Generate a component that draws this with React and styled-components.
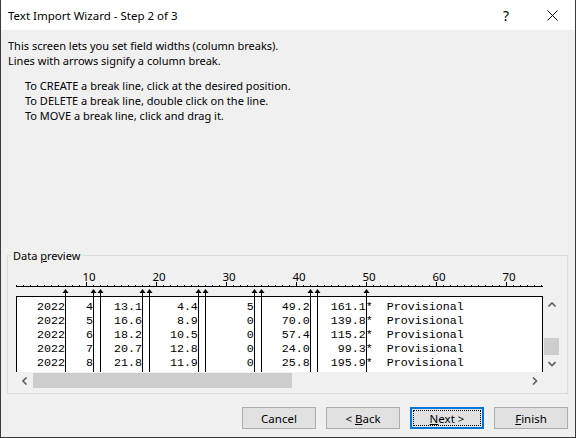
import React from 'react';
import styled, { createGlobalStyle, css } from 'styled-components';

const UI_FONT = '"Noto Sans", "Liberation Sans", sans-serif';
const CHAR_W = 7;
const RULER_LEN = 75;
const BREAKS = [7, 11, 12, 18, 19, 26, 27, 34, 35, 42, 43, 50];
const WIDTHS = [7, 4, 7, 8, 8, 8, 8];

const ROWS = [
  ['2022', '4', '13.1', '4.4', '5', '49.2', '161.1'],
  ['2022', '5', '16.6', '8.9', '0', '70.0', '139.8'],
  ['2022', '6', '18.2', '10.5', '0', '57.4', '115.2'],
  ['2022', '7', '20.7', '12.8', '0', '24.0', '99.3'],
  ['2022', '8', '21.8', '11.9', '0', '25.8', '195.9'],
];

const formatRow = (fields) =>
  fields.map((f, i) => f.padStart(WIDTHS[i])).join('') + '*  Provisional';

const GlobalStyle = createGlobalStyle`
  html, body {
    margin: 0;
    padding: 0;
    background: #f0f0f0;
  }
  body {
    font-family: ${UI_FONT};
    font-size: 11px;
    color: #000;
  }
`;

const Chevron = ({ dir }) => {
  const pts = {
    up: '0.5,4.5 4,1 7.5,4.5',
    down: '0.5,1 4,4.5 7.5,1',
    left: '4.5,0.5 1,4 4.5,7.5',
    right: '1,0.5 4.5,4 1,7.5',
  }[dir];
  const vertical = dir === 'up' || dir === 'down';
  return (
    <svg width={vertical ? 8 : 6} height={vertical ? 6 : 8}>
      <polyline points={pts} fill="none" stroke="#606060" strokeWidth="1.6" />
    </svg>
  );
};

const Ruler = () => {
  const ticks = [];
  for (let n = 0; n <= RULER_LEN; n++) {
    const x = n * CHAR_W + 0.5;
    const major = n % 10 === 0 && n > 0;
    ticks.push(
      <line key={'t' + n} x1={x} x2={x} y1={major ? 19 : 22} y2={23} stroke="#000" />
    );
    if (major) {
      ticks.push(
        <text key={'l' + n} x={x + 2.5} y={18} textAnchor="middle" fontSize="11.5" fontFamily={UI_FONT} fill="#000">
          {n}
        </text>
      );
    }
  }
  return (
    <RulerSvg width="527" height="33">
      <line x1="0" x2="527" y1="23.5" y2="23.5" stroke="#000" />
      {ticks}
    </RulerSvg>
  );
};

const BreakLines = () => (
  <Overlay width="527" height="109">
    {BREAKS.map((n) => {
      const x = n * CHAR_W + 0.5;
      return (
        <g key={n}>
          <line x1={x} x2={x} y1="27" y2="109" stroke="#000" />
          <polygon points={`${x},26 ${x - 3},30 ${x + 3},30`} fill="#000" />
        </g>
      );
    })}
  </Overlay>
);

const App = () => {
  return (
    <>
      <GlobalStyle />
      <Window>
        <TitleBar>
          <Title>Text Import Wizard - Step 2 of 3</Title>
          <CaptionButton>?</CaptionButton>
          <CaptionButton>
            <svg width="11" height="11">
              <path d="M0.5 0.5 L10.5 10.5 M10.5 0.5 L0.5 10.5" stroke="#000" strokeWidth="1" />
            </svg>
          </CaptionButton>
        </TitleBar>
        <Body>
          <Paragraph>
            This screen lets you set field widths (column breaks).
            <br />
            Lines with arrows signify a column break.
          </Paragraph>
          <Instructions>
            To CREATE a break line, click at the desired position.
            <br />
            To DELETE a break line, double click on the line.
            <br />
            To MOVE a break line, click and drag it.
          </Instructions>
          <GroupBox>
            <Legend>
              Data <u>p</u>review
            </Legend>
            <Preview>
              <Ruler />
              <DataBox>
                {ROWS.map((r, i) => (
                  <DataRow key={i}>{formatRow(r)}</DataRow>
                ))}
              </DataBox>
              <VScroll>
                <ScrollButton>
                  <Chevron dir="up" />
                </ScrollButton>
                <VTrack>
                  <VThumb />
                </VTrack>
                <ScrollButton>
                  <Chevron dir="down" />
                </ScrollButton>
              </VScroll>
              <HScroll>
                <ScrollButton>
                  <Chevron dir="left" />
                </ScrollButton>
                <HThumb />
                <HTrack />
                <ScrollButton>
                  <Chevron dir="right" />
                </ScrollButton>
              </HScroll>
              <BreakLines />
            </Preview>
          </GroupBox>
          <ButtonRow>
            <Button>
              <ButtonLabel>
                <span>Cancel</span>
              </ButtonLabel>
            </Button>
            <Button>
              <ButtonLabel>
                <span>
                  &lt; <u>B</u>ack
                </span>
              </ButtonLabel>
            </Button>
            <Button $default>
              <ButtonLabel $focused>
                <span>
                  <u>N</u>ext &gt;
                </span>
              </ButtonLabel>
            </Button>
            <Button>
              <ButtonLabel>
                <span>
                  <u>F</u>inish
                </span>
              </ButtonLabel>
            </Button>
          </ButtonRow>
        </Body>
      </Window>
    </>
  );
};

const Window = styled.div`
  width: 576px;
  height: 438px;
  box-sizing: border-box;
  border: 1px solid #3a3a3a;
  border-top: none;
  background: #f0f0f0;
  display: flex;
  flex-direction: column;
  overflow: hidden;
`;

const TitleBar = styled.div`
  display: flex;
  align-items: center;
  height: 30px;
  flex-shrink: 0;
  background: #fff;
  padding-left: 7px;
`;

const Title = styled.span`
  flex: 1;
  font-size: 11.5px;
  line-height: 15px;
`;

const CaptionButton = styled.div`
  width: 46px;
  height: 30px;
  display: flex;
  align-items: center;
  justify-content: center;
  font-size: 14px;
`;

const Body = styled.div`
  flex: 1;
  display: flex;
  flex-direction: column;
  padding: 8px 7px 0 7px;
`;

const Paragraph = styled.p`
  margin: 0;
  line-height: 15px;
`;

const Instructions = styled.p`
  margin: 10px 0 0 0;
  padding-left: 17px;
  line-height: 15px;
`;

const GroupBox = styled.fieldset`
  margin: 125px 0 0 -1px;
  padding: 0 7px 4px 3px;
  border: 1px solid #dcdcdc;
  min-inline-size: 0;
`;

const Legend = styled.legend`
  padding: 0 2px;
  line-height: 15px;
  font-size: 11px;
`;

const Preview = styled.div`
  position: relative;
  margin-left: 5px;
  display: grid;
  grid-template-columns: 527px 17px;
  grid-template-rows: 33px 76px 17px;
`;

const RulerSvg = styled.svg`
  display: block;
  grid-column: 1;
  grid-row: 1;
`;

const Overlay = styled.svg`
  position: absolute;
  left: 0;
  top: 0;
  pointer-events: none;
`;

const DataBox = styled.div`
  grid-column: 1;
  grid-row: 2;
  background: #fff;
  border: 1px solid #000;
  border-bottom: none;
  padding-top: 3px;
  overflow: hidden;
`;

const DataRow = styled.div`
  margin-left: -1px;
  height: 14px;
  line-height: 14px;
  white-space: pre;
  font-family: "Liberation Mono", "Courier New", monospace;
  font-size: 11.667px;
  color: #000;
`;

const VScroll = styled.div`
  grid-column: 2;
  grid-row: 2;
  display: flex;
  flex-direction: column;
  background: #f0f0f0;
`;

const HScroll = styled.div`
  grid-column: 1;
  grid-row: 3;
  display: flex;
  align-items: center;
  background: #f0f0f0;
`;

const ScrollButton = styled.div`
  width: 17px;
  height: 17px;
  flex-shrink: 0;
  display: flex;
  align-items: center;
  justify-content: center;
`;

const VTrack = styled.div`
  flex: 1;
  display: flex;
  flex-direction: column;
  justify-content: flex-end;
  align-items: center;
`;

const VThumb = styled.div`
  width: 15px;
  height: 17px;
  background: #cdcdcd;
`;

const HThumb = styled.div`
  width: 259px;
  height: 15px;
  background: #cdcdcd;
`;

const HTrack = styled.div`
  flex: 1;
`;

const ButtonRow = styled.div`
  display: flex;
  justify-content: flex-end;
  gap: 10px;
  margin-top: 13px;
`;

const Button = styled.button`
  width: 74px;
  height: 22px;
  box-sizing: border-box;
  padding: 0;
  display: flex;
  background: #e1e1e1;
  border: 1px solid #adadad;
  font-family: ${UI_FONT};
  font-size: 11.5px;
  color: #000;
  ${(p) =>
    p.$default &&
    css`
      border: 2px solid #0078d7;
      padding: 1px;
    `}
`;

const ButtonLabel = styled.span`
  flex: 1;
  display: flex;
  align-items: center;
  justify-content: center;
  line-height: 15px;
  border: 1px dotted transparent;
  ${(p) =>
    p.$focused &&
    css`
      border-color: #000;
    `}
`;

export default App;
